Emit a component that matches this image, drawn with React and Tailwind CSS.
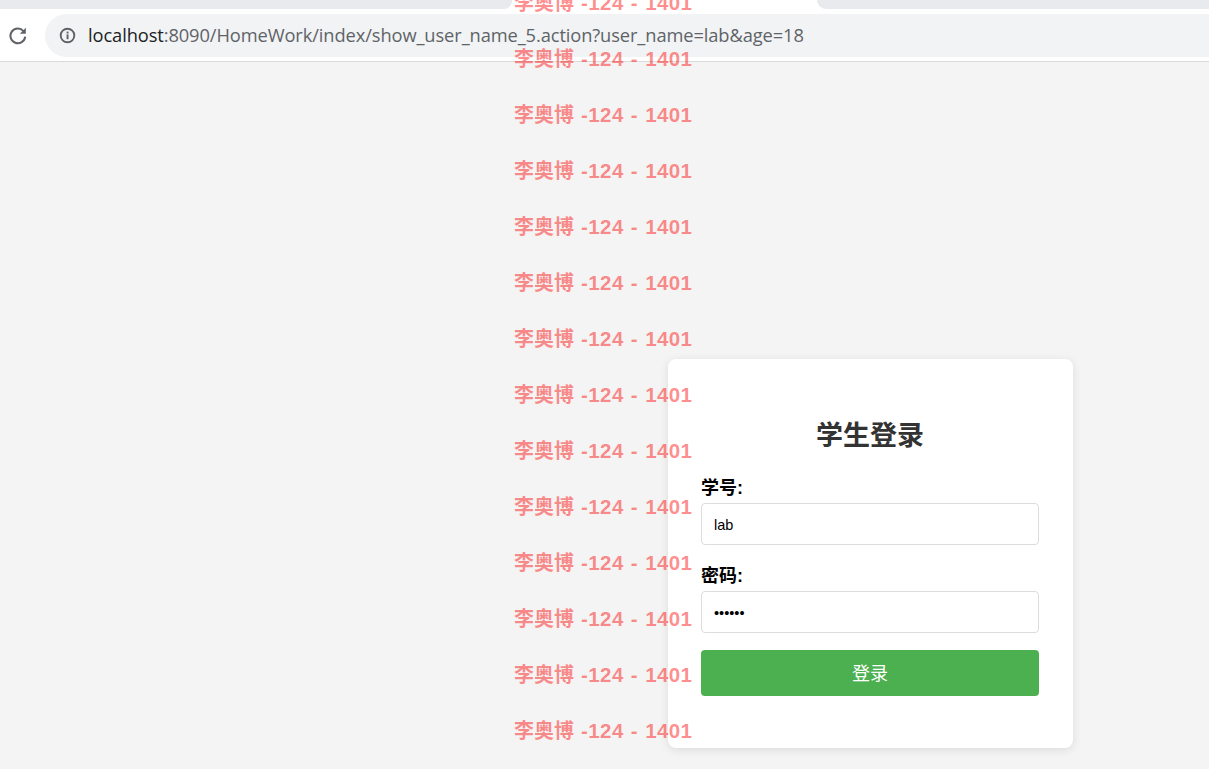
const rows = Array.from({ length: 14 }, (_, i) => i);
const cjk = '"Liberation Sans", "Noto Sans CJK SC", sans-serif';

function BrowserBar() {
  return (
    <div className="h-[62px] bg-white border-b border-[#dadada] flex flex-col">
      <div className="h-[9px] flex justify-between bg-white">
        <div className="w-[512px] bg-[#e8eaed] rounded-br-lg" />
        <div className="w-[392px] bg-[#e8eaed] rounded-bl-xl" />
      </div>
      <div className="flex items-center flex-1 pt-[5px] pb-[4px]">
        <div className="w-[35px] flex justify-center mr-[10px]">
          <svg width="20" height="20" viewBox="0 0 20 20" fill="none" stroke="#5f6368" strokeWidth="2">
            <path d="M17.2 10.6a7.4 7.4 0 1 1-1.7-5.5" />
            <path d="M17.8 1.8v6h-6" fill="#5f6368" stroke="none" />
          </svg>
        </div>
        <div className="flex-1 h-[43px] bg-[#f1f3f4] rounded-l-[22px] flex items-center pl-[14px]">
          <svg width="17" height="17" viewBox="0 0 17 17" fill="none">
            <circle cx="8.5" cy="8.5" r="6.8" stroke="#5f6368" strokeWidth="1.9" />
            <rect x="7.6" y="7.4" width="1.9" height="4.8" fill="#5f6368" />
            <rect x="7.6" y="4.6" width="1.9" height="1.9" fill="#5f6368" />
          </svg>
          <span className="ml-[12px] -mt-[2px] text-[18.3px] text-[#5f6368] font-['Open_Sans',sans-serif] whitespace-nowrap tracking-[-0.1px]">
            <span className="text-[#202124]">localhost</span>:8090/HomeWork/index/show_user_name_5.action?user_name=lab&amp;age=18
          </span>
        </div>
      </div>
    </div>
  );
}

function Field({ label, type, value }) {
  return (
    <label className="block">
      <span className="block text-[18px] leading-[22px] font-bold text-black mb-[4px] pt-[2px] -mt-[1px]">{label}</span>
      <input
        type={type}
        value={value}
        readOnly
        className="block w-full h-[42px] px-[12px] pt-[2px] text-[14.5px] text-black bg-white border border-[#dddddd] rounded-[4px] outline-none"
      />
    </label>
  );
}

function LoginCard() {
  return (
    <div className="w-[405px] h-[389px] bg-white rounded-lg shadow-[0_2px_10px_rgba(0,0,0,0.1)] pl-[33px] pr-[34px] pt-[57px]">
      <h2 className="text-[27px] leading-[40px] font-bold text-[#333333] text-center mb-[20px]">学生登录</h2>
      <Field label="学号:" type="text" value="lab" />
      <div className="h-[19px]" />
      <Field label="密码:" type="password" value="123456" />
      <button className="block w-full h-[46px] mt-[17px] pt-[2px] bg-[#4caf50] text-white text-[18px] rounded-[4px]">登录</button>
    </div>
  );
}

function Watermark() {
  return (
    <div className="absolute inset-0 overflow-hidden pointer-events-none flex flex-col items-start pl-[514px] -mt-[25px]">
      {rows.map((i) => (
        <div key={i} className="h-[56px] shrink-0 flex items-center text-[20px] font-bold text-[rgba(255,0,0,0.45)] whitespace-pre">
          李奥博<span className="text-[20.5px] tracking-[0.4px] [word-spacing:1px]"> -124 - 1401</span>
        </div>
      ))}
    </div>
  );
}

export default function App() {
  return (
    <div className="relative w-[1209px] h-[769px] overflow-hidden bg-[#f4f4f4]" style={{ fontFamily: cjk }}>
      <BrowserBar />
      <div className="pl-[668px] pt-[297px]">
        <LoginCard />
      </div>
      <Watermark />
    </div>
  );
}
